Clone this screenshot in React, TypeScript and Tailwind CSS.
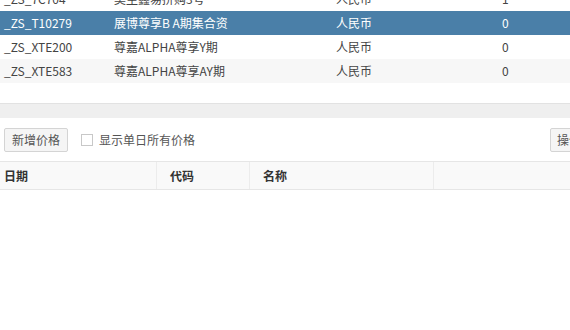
import React from "react";

type Row = { code: string; name: string; currency: string; value: string };

const rows: Row[] = [
  { code: "_ZS_7C704", name: "莫尘鑫易拼购3号", currency: "人民币", value: "1" },
  { code: "_ZS_T10279", name: "展博尊享B A期集合资", currency: "人民币", value: "0" },
  { code: "_ZS_XTE200", name: "尊嘉ALPHA尊享Y期", currency: "人民币", value: "0" },
  { code: "_ZS_XTE583", name: "尊嘉ALPHA尊享AY期", currency: "人民币", value: "0" },
];

const font = { fontFamily: '"Microsoft YaHei", "Noto Sans CJK SC", sans-serif' };

export default function App() {
  const selected = 1;

  return (
    <div className="w-[570px] h-[330px] overflow-hidden bg-white text-[12px] text-[#444]" style={font}>
      {/* Fund grid (scrolled) */}
      <div className="-mt-[13px]">
        {rows.map((r, i) => (
          <div
            key={r.code}
            className={
              "flex h-[24px] items-center " +
              (i === selected ? "bg-[#4a7fa8] text-white" : i % 2 === 1 ? "bg-[#f7f7f7]" : "bg-white")
            }
          >
            <div className="w-[114px] pl-[4px]">{r.code}</div>
            <div className="w-[222px]">{r.name}</div>
            <div className="w-[166px]">{r.currency}</div>
            <div className="flex-1">{r.value}</div>
          </div>
        ))}
      </div>

      {/* Scroll bar strip */}
      <div className="mt-[20px] h-[15px] border-t border-[#e2e2e2] bg-[#efefef]"></div>

      {/* Toolbar */}
      <div className="flex h-[43px] items-center">
        <button className="ml-[4px] h-[24px] w-[64px] shrink-0 rounded-[2px] border border-[#d4d4d4] bg-[#f5f5f5] text-[12px] text-[#555]">
          新增价格
        </button>
        <span className="ml-[13px] h-[12px] w-[12px] shrink-0 border border-[#c8c8c8] bg-white"></span>
        <span className="ml-[6px] text-[#555]">显示单日所有价格</span>
        <button className="ml-auto -mr-[20px] h-[24px] w-[40px] shrink-0 whitespace-nowrap rounded-[2px] border border-[#d4d4d4] bg-[#f5f5f5] pl-[6px] text-left text-[12px] text-[#555]">
          操作
        </button>
      </div>

      {/* Price table header */}
      <div className="flex h-[29px] border-y border-[#e6e6e6] bg-[#f9f9f9] font-bold text-[#333]">
        <div className="flex w-[157px] items-center border-r border-[#ececec] pl-[4px]">日期</div>
        <div className="flex w-[93px] items-center border-r border-[#ececec] pl-[13px]">代码</div>
        <div className="flex w-[184px] items-center border-r border-[#ececec] pl-[13px]">名称</div>
        <div className="flex-1"></div>
      </div>
    </div>
  );
}
